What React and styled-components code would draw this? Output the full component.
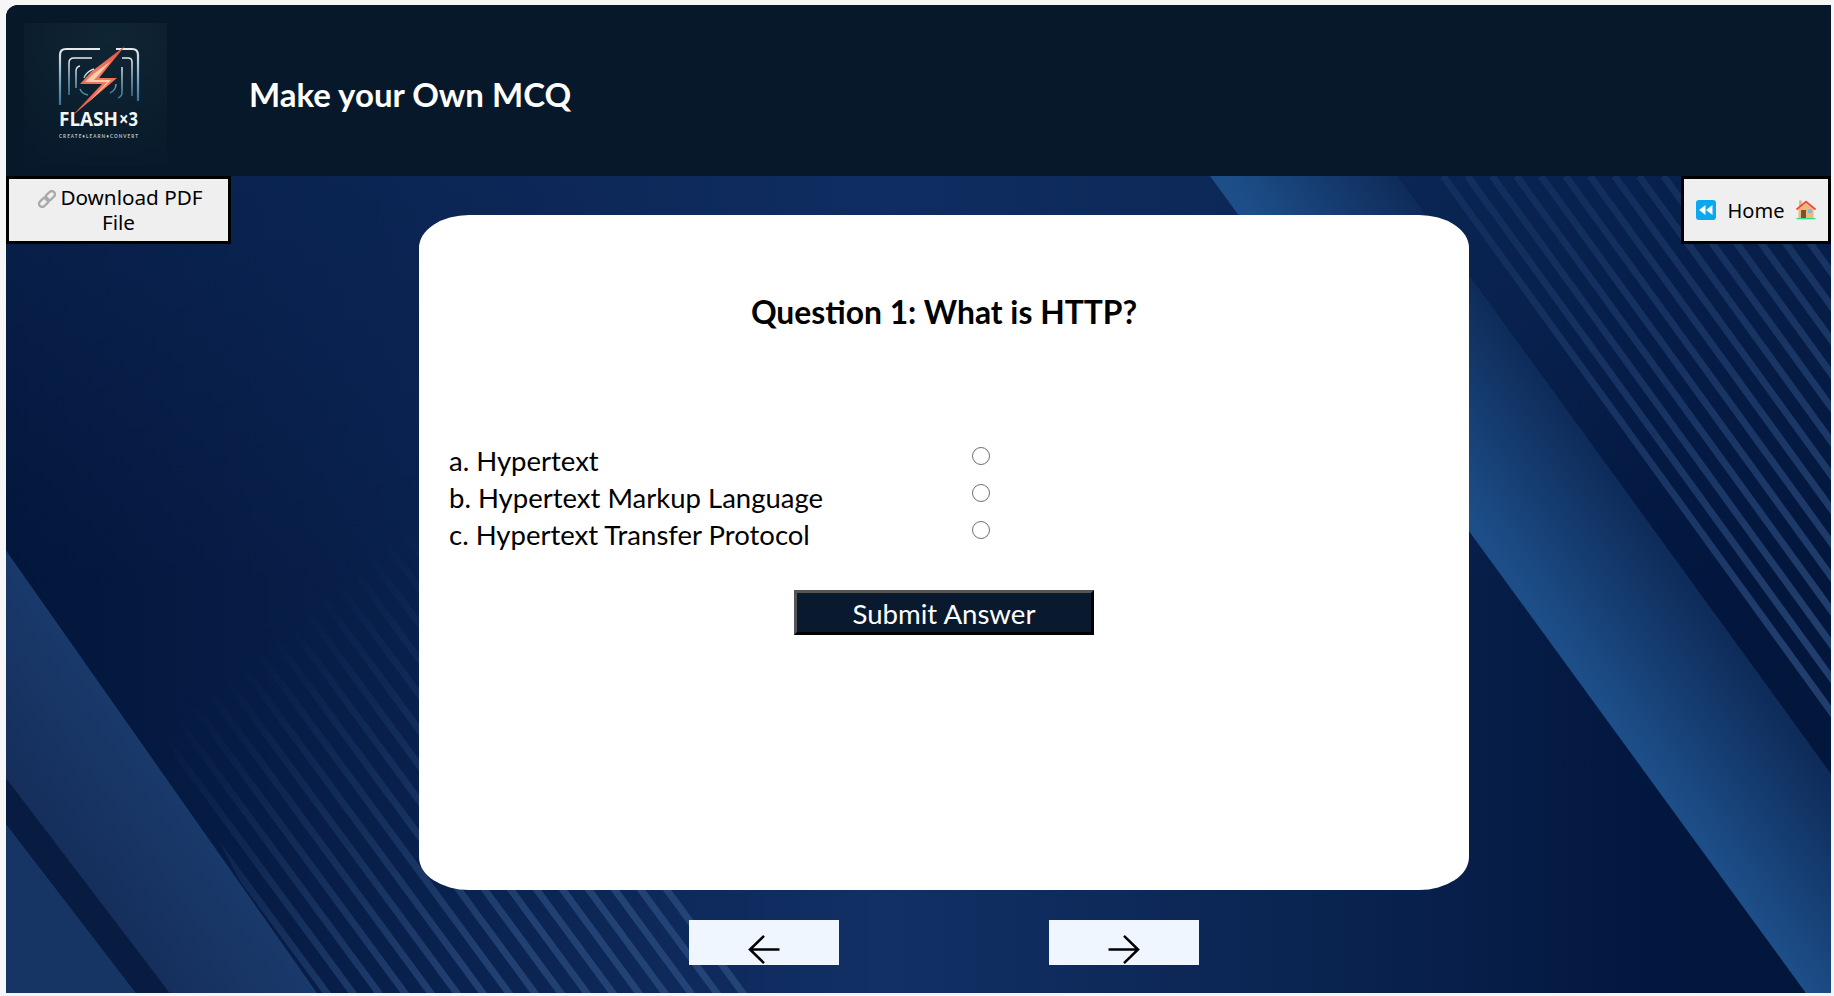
import React from "react";
import styled, { createGlobalStyle } from "styled-components";

const Global = createGlobalStyle`
  html, body { margin: 0; padding: 0; background: #f6f6f6; }
  body { font-family: "Lato", "Liberation Sans", sans-serif; }
  * { box-sizing: border-box; }
`;

const Stage = styled.div`
  margin: 5px 3px 3px 6px;
  height: 988px;
  border-radius: 12px 0 0 0;
  overflow: hidden;
  display: flex;
  flex-direction: column;
  background: #061829;
`;

const Header = styled.header`
  height: 171px;
  flex: none;
  display: flex;
  align-items: center;
  gap: 82px;
  padding: 8px 0 0 18px;
  background: #06182a;
`;

const LogoBox = styled.svg`
  width: 143px;
  height: 143px;
  flex: none;
  display: block;
`;

const Title = styled.h1`
  margin: 0;
  color: #fff;
  font: 700 33px/1 "Lato", "Liberation Sans", sans-serif;
`;

const Main = styled.main`
  position: relative;
  flex: 1;
  display: grid;
  grid-template-columns: 413px 1050px 1fr;
  overflow: hidden;
`;

const Backdrop = styled.svg`
  position: absolute;
  inset: 0;
  width: 100%;
  height: 100%;
`;

const SideButton = styled.button`
  position: relative;
  justify-self: ${(p) => (p.$end ? "end" : "start")};
  width: ${(p) => (p.$end ? "150px" : "225px")};
  height: 68px;
  padding: 0 ${(p) => (p.$end ? "0" : "6px")};
  border: 3px solid #000;
  background: #efefef;
  color: #000;
  font: 400 ${(p) => (p.$end ? "20px" : "20.7px")}/25px "Noto Sans", "Open Sans", sans-serif;
  display: flex;
  align-items: center;
  justify-content: center;
  gap: ${(p) => (p.$end ? "12px" : "0")};
`;

const ButtonText = styled.span`
  display: block;
  text-align: center;
`;

const InlineIcon = styled.svg`
  display: inline-block;
  vertical-align: -3px;
  margin: 0 4px 0 4px;
`;

const HomeIcon = styled.svg`
  display: block;
  flex: none;
`;

const Middle = styled.div`
  position: relative;
  display: flex;
  flex-direction: column;
  align-items: center;
  padding-top: 39px;
`;

const Card = styled.section`
  width: 1050px;
  height: 675px;
  background: #fff;
  border-radius: 50px / 33px;
  padding: 76px 30px 0;
  display: flex;
  flex-direction: column;
`;

const Question = styled.h2`
  margin: 0;
  text-align: center;
  color: #000;
  font: 700 31.8px/42px "Lato", "Liberation Sans", sans-serif;
`;

const Options = styled.div`
  margin-top: 108.5px;
  display: flex;
  flex-direction: column;
`;

const OptionRow = styled.label`
  display: grid;
  grid-template-columns: 523px 18px;
  height: 37px;
  font: 400 27.5px/37px "Lato", "Liberation Sans", sans-serif;
  color: #000;
`;

const Radio = styled.input.attrs({ type: "radio" })`
  appearance: none;
  margin: 5px 0 0;
  width: 18px;
  height: 18px;
  border: 1.3px solid #6f6f6f;
  border-radius: 50%;
  background: #fff;
`;

const Submit = styled.button`
  align-self: center;
  margin-top: 37px;
  width: 300px;
  height: 45px;
  padding: 3px 0 0;
  border: 3px solid;
  border-color: #555 #000 #000 #555;
  background: #0a1a2e;
  color: #fff;
  font: 400 27.6px/1 "Lato", "Liberation Sans", sans-serif;
`;

const Nav = styled.nav`
  margin-top: 30px;
  display: flex;
  gap: 210px;
`;

const NavButton = styled.button`
  width: 150px;
  height: 45px;
  padding: 14px 0 0;
  border: 0;
  background: #eff6ff;
  display: flex;
  justify-content: center;
  align-items: flex-start;
`;

const Arrow = ({ dir }) => (
  <svg width="34" height="31" viewBox="0 0 34 32" fill="none" stroke="#000" strokeWidth="2.6">
    {dir === "left" ? (
      <path d="M33 16H3M17 2 2.500 16 17 30" />
    ) : (
      <path d="M1 16H31M17 2 31.500 16 17 30" />
    )}
  </svg>
);

const LinkGlyph = () => (
  <InlineIcon width="18" height="18" viewBox="0 0 20 20" fill="none" stroke="#a9a9a9" strokeWidth="2.6">
    <g transform="rotate(-45 10 10)">
      <rect x="-1" y="6.500" width="12" height="7" rx="3.500" />
      <rect x="9" y="6.500" width="12" height="7" rx="3.500" />
    </g>
  </InlineIcon>
);

const RewindGlyph = () => (
  <HomeIcon width="20" height="20" viewBox="0 0 20 20">
    <rect width="20" height="20" rx="3" fill="#0aa8ee" />
    <path d="M9.500 5v10L3 10zM16.500 5v10L10 10z" fill="#fff" />
  </HomeIcon>
);

const HouseGlyph = () => (
  <HomeIcon width="20" height="20" viewBox="0 0 20 20">
    <rect x="3" y="0.500" width="3" height="6" fill="#e8b877" />
    <path d="M2.500 9 10 2.500 17.500 9v9h-15z" fill="#f0b97a" />
    <rect x="5" y="10" width="5" height="8" fill="#7a4f3a" />
    <rect x="12" y="9.500" width="4" height="3.500" fill="#7fb8e6" />
    <path d="M0.500 9.500 10 1.500 19.500 9.500" fill="none" stroke="#f4433c" strokeWidth="1.700" />
    <rect x="0.500" y="18" width="19" height="1.300" fill="#2fe08a" />
  </HomeIcon>
);

const Logo = () => (
  <LogoBox viewBox="0 0 143 143">
    <defs>
      <linearGradient id="ring" x1="0" y1="0" x2="0" y2="1">
        <stop offset="0" stopColor="#e4eaee" />
        <stop offset="0.55" stopColor="#7ba6c0" />
        <stop offset="1" stopColor="#3a7498" />
      </linearGradient>
      <linearGradient id="bolt" x1="0" y1="1" x2="1" y2="0">
        <stop offset="0" stopColor="#e2503e" />
        <stop offset="0.55" stopColor="#f27a5e" />
        <stop offset="1" stopColor="#e5503f" />
      </linearGradient>
      <radialGradient id="logoBg" cx="0.6" cy="0.1" r="1">
        <stop offset="0" stopColor="#102533" />
        <stop offset="1" stopColor="#07192a" />
      </radialGradient>
    </defs>
    <rect width="143" height="143" fill="url(#logoBg)" />
    <g fill="none" stroke="url(#ring)">
      <path d="M76 26H42q-6 0-6 6v50" strokeWidth="2.200" />
      <path d="M92 26h16q6 0 6 6v46" strokeWidth="2.200" />
      <path d="M68 35H50q-5 0-5 5v32M98 35h6q4 0 4 4v34" strokeWidth="1.600" />
      <path d="M52 65V48q0-4 4-5M56 66q2 5 8 6M98 44v26q0 3-4 5" strokeWidth="1.500" />
      <path d="M60 55q2-6 10-9M86 70q6-3 6-9" strokeWidth="1.500" />
    </g>
    <path d="M101 23 67 49 56 61H78L47 94 93 55H75Z" fill="url(#bolt)" />
    <path d="M87 38 68 52 61 59H83L64 80 87 57H70Z" fill="#f9cdb0" />
    <text x="35" y="103" fill="#f4f5f5" fontFamily="Open Sans, sans-serif" fontWeight="700" fontSize="19" textLength="59" lengthAdjust="spacingAndGlyphs">FLASH</text>
    <text x="95" y="103" fill="#f4f5f5" fontFamily="Open Sans, sans-serif" fontWeight="700" fontSize="19" textLength="19" lengthAdjust="spacingAndGlyphs">×3</text>
    <text x="35" y="115" fill="#b9c4ca" fontFamily="Lato, sans-serif" fontWeight="700" fontSize="4.600" textLength="79">CREATE•LEARN•CONVERT</text>
  </LogoBox>
);

const stripes = (start, count, step, y0, y1, slope) =>
  Array.from({ length: count }, (_, i) => {
    const x0 = start + i * step;
    return `M${x0} ${y0}L${x0 + (y1 - y0) / slope} ${y1}`;
  }).join("");

const Background = () => (
  <Backdrop viewBox="6 176 1825 817" preserveAspectRatio="none">
    <defs>
      <linearGradient id="base" x1="0" y1="0" x2="1" y2="0">
        <stop offset="0" stopColor="#03163a" />
        <stop offset="0.2" stopColor="#081f4a" />
        <stop offset="0.48" stopColor="#123066" />
        <stop offset="0.72" stopColor="#0a2450" />
        <stop offset="0.9" stopColor="#02173f" />
        <stop offset="1" stopColor="#03163b" />
      </linearGradient>
      <linearGradient id="topEdge" x1="0" y1="0" x2="0" y2="1">
        <stop offset="0" stopColor="#0d2a5c" stopOpacity="0.5" />
        <stop offset="0.5" stopColor="#0d2a5c" stopOpacity="0" />
      </linearGradient>
      <linearGradient id="bandR" gradientUnits="userSpaceOnUse" x1="1500" y1="560" x2="1640" y2="460">
        <stop offset="0" stopColor="#1d4e88" />
        <stop offset="1" stopColor="#0b2450" />
      </linearGradient>
      <linearGradient id="bandL" gradientUnits="userSpaceOnUse" x1="230" y1="760" x2="60" y2="880">
        <stop offset="0" stopColor="#1b3f72" />
        <stop offset="1" stopColor="#152d5a" />
      </linearGradient>
      <linearGradient id="fadeL" gradientUnits="userSpaceOnUse" x1="300" y1="600" x2="560" y2="900">
        <stop offset="0" stopColor="#fff" stopOpacity="0" />
        <stop offset="1" stopColor="#fff" stopOpacity="1" />
      </linearGradient>
      <linearGradient id="fadeR" gradientUnits="userSpaceOnUse" x1="1500" y1="220" x2="1800" y2="640">
        <stop offset="0" stopColor="#fff" stopOpacity="0.35" />
        <stop offset="1" stopColor="#fff" stopOpacity="1" />
      </linearGradient>
      <mask id="maskL">
        <rect x="0" y="176" width="1834" height="820" fill="url(#fadeL)" />
      </mask>
      <mask id="maskR">
        <rect x="0" y="176" width="1834" height="820" fill="url(#fadeR)" />
      </mask>
      <clipPath id="clipL">
        <path d="M380 472 763 996H300L120 651Z" />
      </clipPath>
      <clipPath id="clipR">
        <path d="M1432 176H1834V736Z" />
      </clipPath>
    </defs>
    <rect x="5" y="176" width="1830" height="820" fill="url(#base)" />
    <rect x="5" y="176" width="1830" height="820" fill="url(#topEdge)" />
    <g clipPath="url(#clipL)" mask="url(#maskL)">
      <path d={stripes(-300, 44, 26, 176, 996, 1.36)} stroke="#3f639a" strokeOpacity="0.45" strokeWidth="7" fill="none" />
    </g>
    <path d="M1210 176H1397L1834 778V996H1808Z" fill="url(#bandR)" />
    <path d="M5 549 319 996H5Z" fill="url(#bandL)" />
    <path d="M5 777 172 996H138L5 823Z" fill="#071c40" />
    <path d="M5 823 138 996H5Z" fill="#163564" />
    <g clipPath="url(#clipR)" mask="url(#maskR)">
      <path d={stripes(1100, 34, 24.500, 176, 760, 1.38)} stroke="#3a5f96" strokeOpacity="0.55" strokeWidth="7" fill="none" />
    </g>
  </Backdrop>
);

export default function App() {
  return (
    <>
      <Global />
      <Stage>
        <Header>
          <Logo />
          <Title>Make your Own MCQ</Title>
        </Header>
        <Main>
          <Background />
          <SideButton>
            <ButtonText>
              <LinkGlyph />Download PDF
              <br />
              File
            </ButtonText>
          </SideButton>
          <Middle>
            <Card>
              <Question>Question 1: What is HTTP?</Question>
              <Options>
                <OptionRow>a. Hypertext<Radio name="answer" /></OptionRow>
                <OptionRow>b. Hypertext Markup Language<Radio name="answer" /></OptionRow>
                <OptionRow>c. Hypertext Transfer Protocol<Radio name="answer" /></OptionRow>
              </Options>
              <Submit>Submit Answer</Submit>
            </Card>
            <Nav>
              <NavButton aria-label="Previous"><Arrow dir="left" /></NavButton>
              <NavButton aria-label="Next"><Arrow dir="right" /></NavButton>
            </Nav>
          </Middle>
          <SideButton $end>
            <RewindGlyph />
            <ButtonText>Home</ButtonText>
            <HouseGlyph />
          </SideButton>
        </Main>
      </Stage>
    </>
  );
}
